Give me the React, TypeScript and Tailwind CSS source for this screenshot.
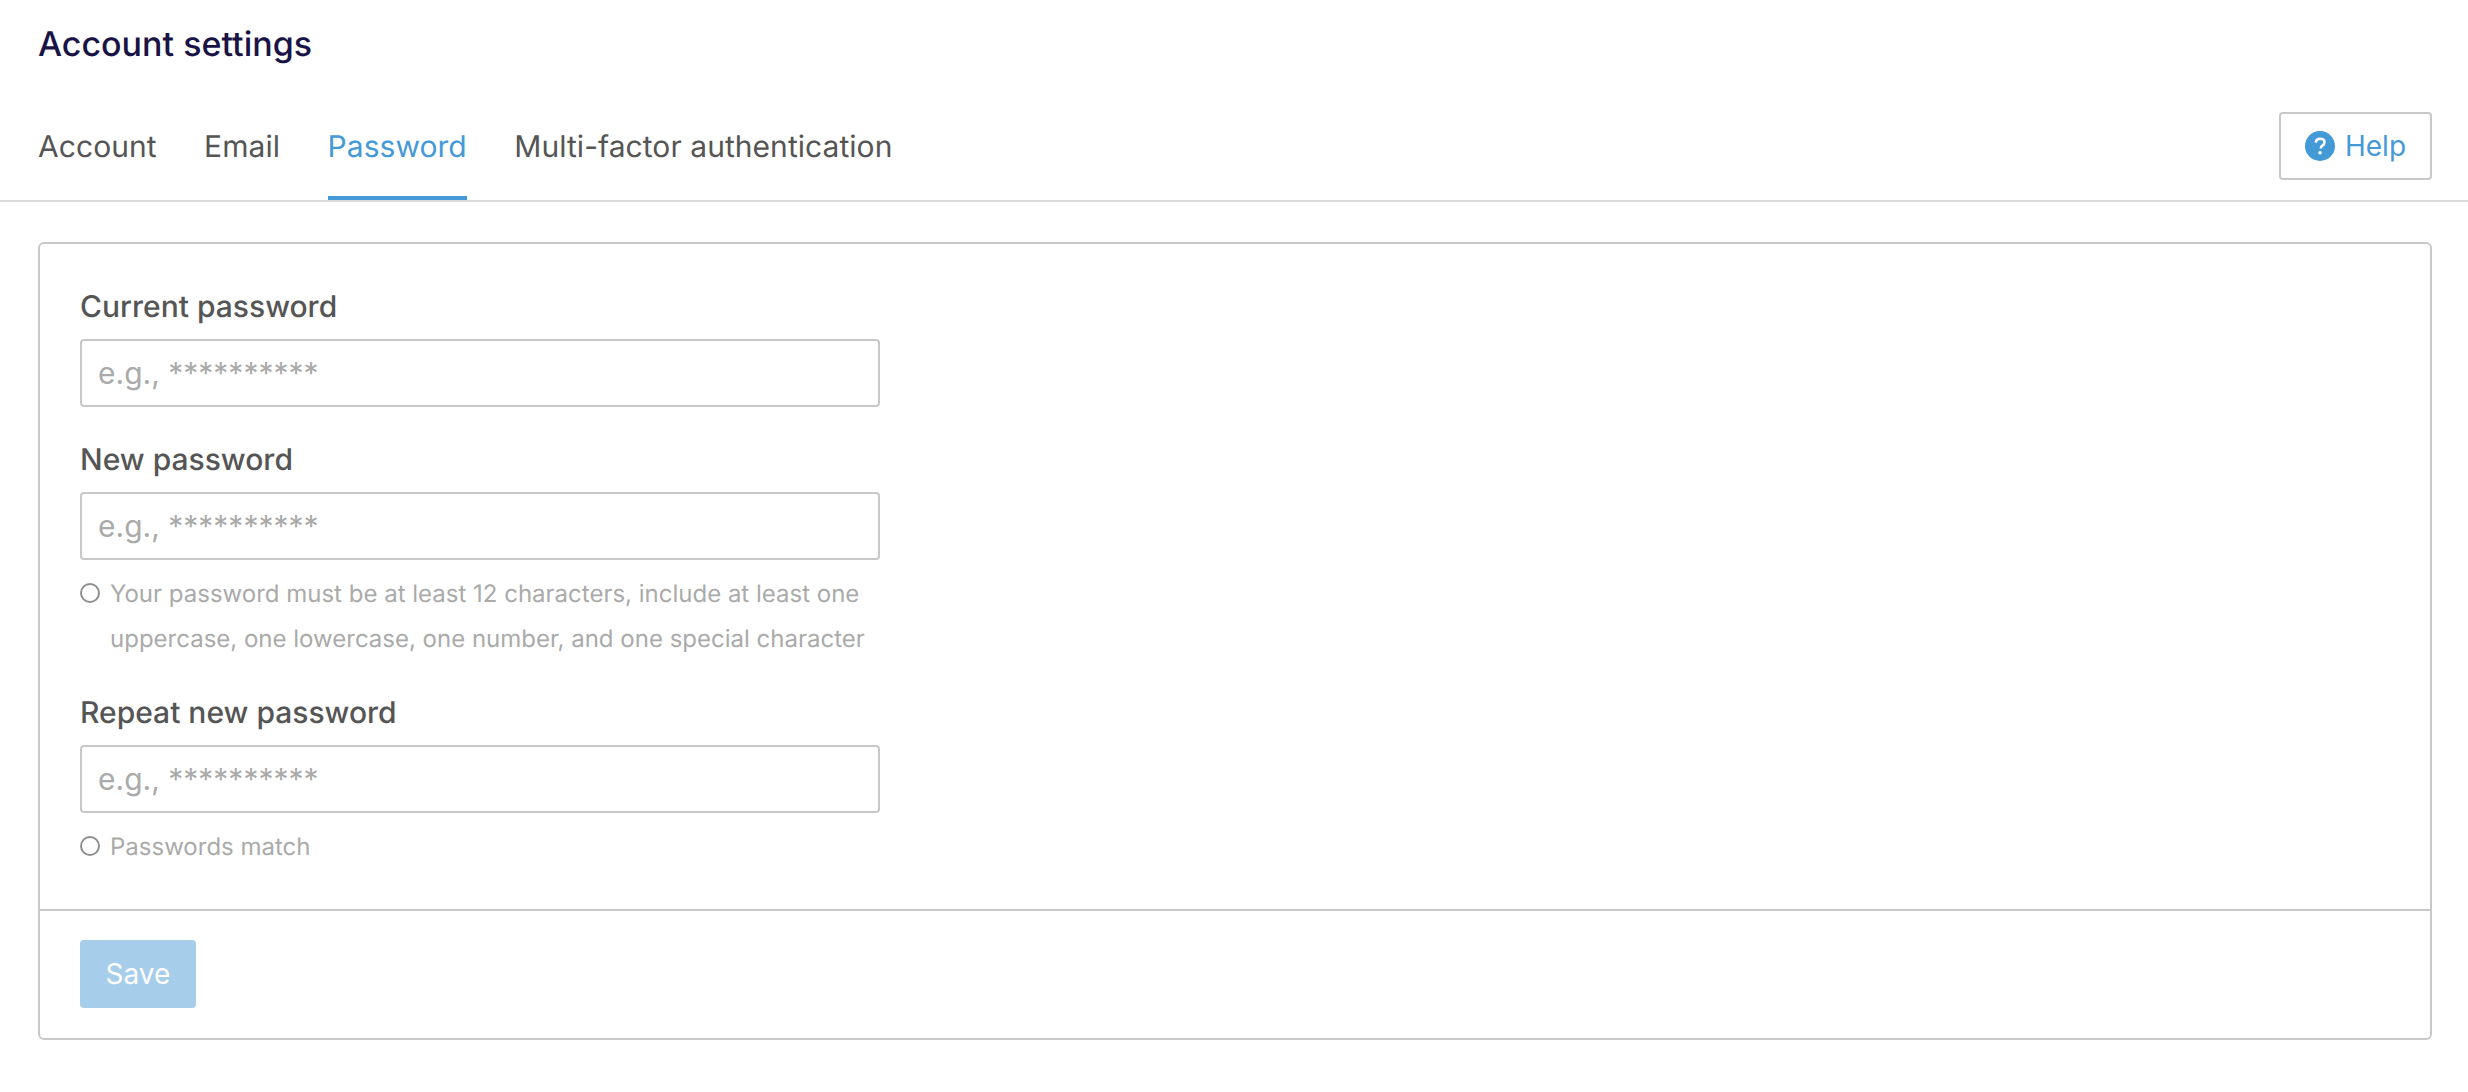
export default function App() {
  const tabs = ["Account", "Email", "Password", "Multi-factor authentication"];
  const inputCls =
    "block w-[800px] h-[68px] border-2 border-[#c8c8c8] rounded-[4px] bg-white px-[16px] text-[30px] text-[#555555] placeholder:text-[#aaaaaa] outline-none";
  const labelCls = "block text-[30px] leading-[44px] font-medium text-[#555555] mb-[10px]";
  const Hint = ({ lines }: { lines: string[] }) => (
    <div className="flex mt-[11px] gap-[10px] text-[24px] leading-[45px] text-[#aaaaaa]">
      <span className="w-[20px] h-[20px] mt-[12px] rounded-full border-2 border-[#8f8f8f] shrink-0" />
      <div>
        {lines.map((l) => (
          <div key={l}>{l}</div>
        ))}
      </div>
    </div>
  );
  return (
    <div className="w-full h-[1092px] bg-white font-['Inter','Noto_Sans',sans-serif] overflow-hidden [text-rendering:geometricPrecision]">
      <h1 className="pl-[38px] pt-[22px] h-[90px] text-[34px] leading-[46px] font-medium text-[#1a1446]">
        Account settings
      </h1>
      <div className="flex justify-between items-start h-[112px] border-b-2 border-[#dcdcdc] pl-[38px] pr-[36px]">
        <nav className="flex gap-[47.5px] h-[110px] tracking-[0.05px]">
          {tabs.map((t) => (
            <a
              key={t}
              className={
                t === "Password"
                  ? "h-full pt-[35px] text-[30px] leading-[44px] text-[#4499d7] border-b-4 border-[#4499d7]"
                  : "h-full pt-[35px] text-[30px] leading-[44px] text-[#555555]"
              }
            >
              {t}
            </a>
          ))}
        </nav>
        <button className="mt-[22px] flex items-center justify-center gap-[10px] w-[153px] h-[68px] border-2 border-[#c8c8c8] rounded-[4px] bg-white text-[28px] text-[#4499d7]">
          <svg width="30" height="30" viewBox="0 0 30 30" aria-hidden="true">
            <circle cx="15" cy="15" r="15" fill="#4499d7" />
            <path
              d="M10.8 11.6c.2-2.4 2-3.8 4.4-3.8 2.5 0 4.3 1.4 4.3 3.5 0 1.6-.9 2.5-2.1 3.3-1.1.7-1.5 1.2-1.5 2.3v.5"
              fill="none"
              stroke="#ffffff"
              strokeWidth="2.6"
            />
            <circle cx="15" cy="21.8" r="1.8" fill="#ffffff" />
          </svg>
          <span>Help</span>
        </button>
      </div>
      <div className="ml-[38px] mr-[36px] mt-[40px] h-[798px] border-2 border-[#c8c8c8] rounded-[6px] flex flex-col">
        <form className="h-[667px] border-b-2 border-[#c8c8c8] pl-[40px] pt-[41px]">
          <label className={labelCls}>Current password</label>
          <input className={inputCls} placeholder="e.g., **********" />
          <label className={labelCls + " mt-[31px]"}>New password</label>
          <input className={inputCls} placeholder="e.g., **********" />
          <Hint
            lines={[
              "Your password must be at least 12 characters, include at least one",
              "uppercase, one lowercase, one number, and one special character",
            ]}
          />
          <label className={labelCls + " mt-[30px]"}>Repeat new password</label>
          <input className={inputCls} placeholder="e.g., **********" />
          <Hint lines={["Passwords match"]} />
        </form>
        <div className="pl-[40px] pt-[29px]">
          <button className="w-[116px] h-[68px] rounded-[4px] bg-[#a6cde9] text-white text-[28px]">Save</button>
        </div>
      </div>
    </div>
  );
}
